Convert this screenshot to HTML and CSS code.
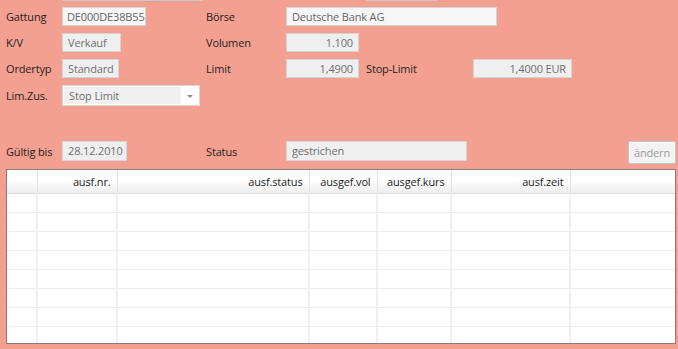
FILE: index.html
```html
<!DOCTYPE html>
<html lang="de">
<head>
    <meta charset="UTF-8">
    <title>Order</title>
    <link rel="stylesheet" href="styles.css">
</head>
<body>
<div class="order-panel">
    <div class="cut-row">
        <div class="cut-a"></div>
        <div class="cut-b"></div>
    </div>

    <div class="row">
        <div class="lbl">Gattung</div>
        <div class="cell"><div class="field light w-gattung">DE000DE38B55</div></div>
        <div class="lbl lbl-2">Börse</div>
        <div class="field light w-boerse">Deutsche Bank AG</div>
    </div>
    <div class="row">
        <div class="lbl">K/V</div>
        <div class="cell"><div class="field w-kv">Verkauf</div></div>
        <div class="lbl lbl-2">Volumen</div>
        <div class="field num w-num">1.100</div>
    </div>
    <div class="row">
        <div class="lbl">Ordertyp</div>
        <div class="cell"><div class="field w-typ">Standard</div></div>
        <div class="lbl lbl-2">Limit</div>
        <div class="field num w-num">1,4900</div>
        <div class="lbl lbl-stop">Stop-Limit</div>
        <div class="field num w-stop">1,4000 EUR</div>
    </div>
    <div class="row row-combo">
        <div class="lbl">Lim.Zus.</div>
        <div class="combo">
            <div class="combo-text">Stop Limit</div>
            <div class="combo-arrow"></div>
        </div>
    </div>

    <div class="row row-status">
        <div class="lbl">Gültig bis</div>
        <div class="cell"><div class="field w-date">28.12.2010</div></div>
        <div class="lbl lbl-2">Status</div>
        <div class="field w-status">gestrichen</div>
        <button class="btn">ändern</button>
    </div>

    <div class="grid-wrap">
        <table class="grid">
            <colgroup>
                <col class="c0">
                <col class="c1">
                <col class="c2">
                <col class="c3">
                <col class="c4">
                <col class="c5">
                <col class="c6">
            </colgroup>
            <thead>
                <tr>
                    <th></th>
                    <th>ausf.nr.</th>
                    <th>ausf.status</th>
                    <th>ausgef.vol</th>
                    <th>ausgef.kurs</th>
                    <th>ausf.zeit</th>
                    <th></th>
                </tr>
            </thead>
            <tbody>
                <tr><td></td><td></td><td></td><td></td><td></td><td></td><td></td></tr>
                <tr><td></td><td></td><td></td><td></td><td></td><td></td><td></td></tr>
                <tr><td></td><td></td><td></td><td></td><td></td><td></td><td></td></tr>
                <tr><td></td><td></td><td></td><td></td><td></td><td></td><td></td></tr>
                <tr><td></td><td></td><td></td><td></td><td></td><td></td><td></td></tr>
                <tr><td></td><td></td><td></td><td></td><td></td><td></td><td></td></tr>
                <tr><td></td><td></td><td></td><td></td><td></td><td></td><td></td></tr>
                <tr><td></td><td></td><td></td><td></td><td></td><td></td><td></td></tr>
            </tbody>
        </table>
    </div>
</div>
</body>
</html>
```

FILE: styles.css
```css
body {
    margin: 0;
    background-color: #f4a091;
    font-family: "Open Sans", "Noto Sans", Arial, sans-serif;
    font-size: 11px;
    letter-spacing: -0.15px;
    color: #1e1e1e;
    width: 678px;
    height: 349px;
    overflow: hidden;
}
.order-panel {
    padding: 0 2px 0 6px;
    height: 349px;
    box-sizing: border-box;
}
.cut-row {
    display: flex;
    height: 1px;
    margin-bottom: 6px;
}
.cut-a {
    margin-left: 56px;
    width: 140px;
    background-color: #c9c9c9;
}
.cut-b {
    margin-left: 164px;
    width: 72px;
    background-color: #c9c9c9;
}
.row {
    display: flex;
    align-items: center;
    height: 19px;
    margin-bottom: 7px;
}
.row-combo {
    height: 21px;
    margin-top: 1px;
}
.row-status {
    margin-top: 35px;
    height: 20px;
    margin-bottom: 8px;
}
.lbl {
    width: 56px;
    flex: none;
    white-space: nowrap;
}
.lbl-2 {
    width: 80px;
}
.lbl-stop {
    width: 107px;
    margin-left: 7px;
}
.cell {
    width: 144px;
    flex: none;
}
.field {
    box-sizing: border-box;
    height: 19px;
    line-height: 17px;
    padding: 0 5px;
    border: 1px solid #d8d3d2;
    background-color: #efefef;
    color: #6f6f6f;
    white-space: nowrap;
    overflow: hidden;
}
.row-status .field {
    height: 20px;
    line-height: 18px;
}
.field.light {
    background-color: #f6f6f6;
    color: #666;
}
.w-gattung {
    padding: 0 3px 0 4px;
}
.num {
    text-align: right;
}
.w-gattung { width: 84px; }
.w-boerse { width: 211px; }
.w-kv { width: 59px; }
.w-typ { width: 57px; }
.w-num { width: 73px; }
.w-stop { width: 99px; }
.w-date { width: 65px; }
.w-status { width: 181px; }
.combo {
    display: flex;
    width: 138px;
    height: 21px;
    box-sizing: border-box;
    border: 1px solid #dcd6d5;
    background-color: #ffffff;
    padding: 1px;
}
.combo-text {
    width: 117px;
    background-color: #f0f0f0;
    color: #707070;
    line-height: 17px;
    padding-left: 5px;
    box-sizing: border-box;
}
.combo-arrow {
    flex: 1;
    position: relative;
}
.combo-arrow::after {
    content: "";
    position: absolute;
    left: 6px;
    top: 8px;
    border-left: 3px solid transparent;
    border-right: 3px solid transparent;
    border-top: 3px solid #8a8a8a;
}
.btn {
    margin-left: auto;
    height: 23px;
    margin-top: 3px;
    width: 48px;
    padding: 0;
    font-family: inherit;
    font-size: 11px;
    letter-spacing: -0.15px;
    color: #9a9a9a;
    background-color: #f3f3f3;
    border: 1px solid #c4c4c4;
    box-shadow: inset 0 0 0 1px #fbfbfb;
    border-radius: 2px;
}
.grid-wrap {
    width: 670px;
    height: 175px;
    box-sizing: border-box;
    border: 1px solid #857b7a;
    background-color: #ffffff;
    overflow: hidden;
}
.grid {
    border-collapse: collapse;
    table-layout: fixed;
    width: 668px;
}
.grid th {
    height: 23px;
    padding: 0 6px 0 0;
    text-align: right;
    font-weight: normal;
    color: #1e1e1e;
    background: linear-gradient(#ffffff, #ffffff 40%, #ededed);
    border-right: 1px solid #e2e2e2;
    border-bottom: 1px solid #dcdcdc;
    white-space: nowrap;
}
.grid td {
    height: 18px;
    padding: 0;
    border-right: 2px solid #edf1f4;
    border-bottom: 1px solid #ececec;
}
.grid td:last-child, .grid th:last-child {
    border-right: none;
}
.c0 { width: 30px; }
.c1 { width: 80px; }
.c2 { width: 192px; }
.c3 { width: 68px; }
.c4 { width: 74px; }
.c5 { width: 119px; }
.c6 { width: 105px; }
```
